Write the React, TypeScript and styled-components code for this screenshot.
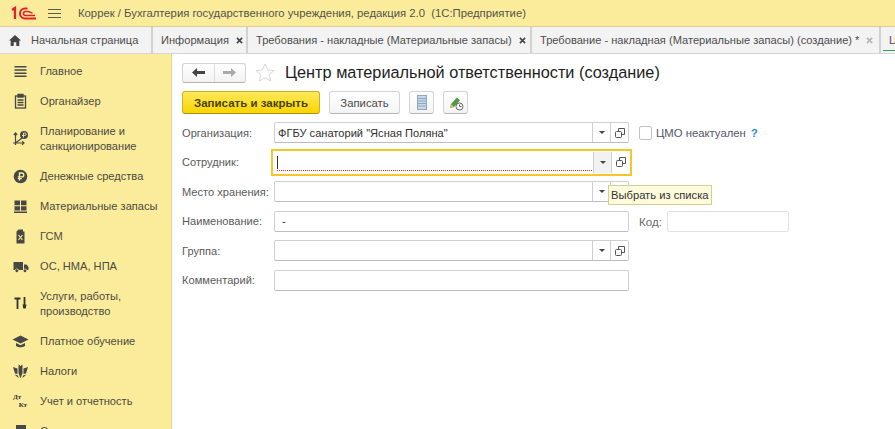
import React from "react";
import styled, { createGlobalStyle } from "styled-components";

const Global = createGlobalStyle`
  html, body { margin: 0; padding: 0; height: 100%; overflow: hidden; background: #fff; }
  body { font-family: "Liberation Sans", Arial, sans-serif; font-size: 11.1px; color: #4b4b4b; }
  #root { height: 100%; }
  * { box-sizing: border-box; }
`;

const Page = styled.div`display: flex; flex-direction: column; width: 895px; height: 429px; overflow: hidden; position: relative;`;
const Header = styled.header`display: flex; align-items: center; height: 27px; flex: none; background: #fbec9c; border-bottom: 1px solid #dcd08c; padding-left: 11px;`;
const HeaderTitle = styled.div`margin-left: 17px; font-size: 11.3px; color: #55534a; white-space: nowrap;`;
const MenuIcon = styled.svg`margin-left: 11px; flex: none;`;
const Tabs = styled.nav`display: flex; height: 27px; flex: none; background: #f3f3f3; border-bottom: 1px solid #d6d6d6; overflow: hidden;`;
const Tab = styled.div<{ $w: number; $last?: boolean; $first?: boolean }>`
  display: flex; align-items: center; flex: none; width: ${p => p.$w}px; padding-left: ${p => (p.$first ? 9 : 8)}px; white-space: nowrap; color: #4d4d4d;
  border-right: ${p => (p.$last ? "none" : "2px solid #d2d2d2")}; position: relative;
`;
const TabText = styled.span`flex: none;`;
const HomeIcon = styled.svg`margin-right: 10px; flex: none;`;
const TabClose = styled.span`display: flex; flex: none; margin-left: 7px;`;
const ActiveMark = styled.div`position: absolute; left: 2px; right: 0; bottom: 2px; height: 1px; background: #2f9e5b;`;
const Main = styled.div`display: flex; flex: 1; min-height: 0;`;
const Side = styled.aside`width: 172px; flex: none; background: #fbec9c; border-right: 1px solid #e5d98f; padding-top: 2px; overflow: hidden;`;
const SideItem = styled.div<{ $double?: boolean }>`display: flex; align-items: center; flex: none; height: ${p => (p.$double ? 45 : 30)}px; color: #4c4a3e; line-height: 14.5px;`;
const SideIcon = styled.div`width: 40px; flex: none; display: flex; justify-content: center;`;
const SideLabel = styled.div``;
const Journal = styled.span`font-family: "Liberation Serif", serif; font-weight: 700; font-size: 7px; line-height: 8px; color: #333; display: block; width: 14px;`;
const JournalBottom = styled(Journal)`text-align: right;`;
const Content = styled.main`flex: 1; padding: 8px 0 0 10px; position: relative;`;
const TitleRow = styled.div`display: flex; align-items: center; height: 21px;`;
const NavGroup = styled.div`display: flex; width: 64px; height: 20px; background: linear-gradient(#fff, #f2f2f2); border: 1px solid #d4d4d4; border-bottom-color: #b5b5b5; border-radius: 3px; margin-right: 9px;`;
const NavBtn = styled.div<{ $sep?: boolean }>`flex: 1; display: flex; align-items: center; justify-content: center; border-left: ${p => (p.$sep ? "1px solid #dcdcdc" : "none")};`;
const Title = styled.h1`margin: 0 0 0 10px; font-size: 16.3px; font-weight: 400; color: #1d1d1d; white-space: nowrap;`;
const Toolbar = styled.div`display: flex; gap: 9px; margin-top: 8px; height: 23px;`;
const Primary = styled.button`width: 138px; height: 23px; padding: 0; font: 700 11.5px "Liberation Sans", sans-serif; color: #4a4300; background: linear-gradient(#fee95a, #f9d500); border: 1px solid #cdb220; border-bottom-color: #ac9512; border-radius: 3px;`;
const Secondary = styled.button<{ $w: number }>`width: ${p => p.$w}px; height: 23px; padding: 0; font: 11.3px "Liberation Sans", sans-serif; color: #4b4b4b; background: linear-gradient(#fff, #f4f4f4); border: 1px solid #d4d4d4; border-bottom-color: #b5b5b5; border-radius: 3px; display: flex; align-items: center; justify-content: center;`;
const Form = styled.div`display: flex; flex-direction: column; gap: 8.6px; margin-top: 8px; position: relative;`;
const Row = styled.div`display: flex; align-items: center; height: 21px;`;
const Label = styled.label`width: 92px; flex: none; color: #5a5a5a; white-space: nowrap;`;
const Field = styled.div<{ $w?: number; $focus?: boolean; $faint?: boolean }>`
  display: flex; align-items: stretch; flex: none; width: ${p => p.$w ?? 355}px; height: 21px; background: #fff; border-radius: 2px;
  border: 1px solid ${p => (p.$faint ? "#e2e2e2" : "#cfcfcf")}; border-bottom-color: ${p => (p.$faint ? "#e2e2e2" : "#bdbdbd")};
  ${p => p.$focus && "outline: 2px solid #f6c62a; outline-offset: 1px; border: 0; border-radius: 0;"}
`;
const Value = styled.div<{ $pad?: number }>`flex: 1; min-width: 0; padding-left: ${p => p.$pad ?? 3}px; display: flex; align-items: center; color: #303030; position: relative;`;
const Caret = styled.div`width: 1px; height: 13px; background: #333;`;
const ErrorLine = styled.div`position: absolute; left: 3px; right: 1px; bottom: 2px; border-bottom: 1px dotted #f0303a;`;
const Cell = styled.div<{ $hover?: boolean }>`width: 18px; flex: none; display: flex; align-items: center; justify-content: center; border-left: 1px solid #cfcfcf; background: ${p => (p.$hover ? "#f2f2f2" : "#fff")};`;
const Check = styled.div`width: 13px; height: 14px; margin-left: 10px; border: 1px solid #c4c4c4; border-radius: 2px; background: #fff; flex: none;`;
const CheckLabel = styled.span`margin-left: 4px; font-size: 11.3px; color: #55556a;`;
const Help = styled.span`margin-left: 5px; font-size: 11.5px; color: #2f8fd0; font-weight: 700;`;
const CodeLabel = styled.span`margin-left: 10px; width: 28px; flex: none; font-size: 11.6px; color: #6a6a6a;`;
const Tooltip = styled.div`position: absolute; left: 426px; top: 63px; width: 104px; height: 20px; padding-left: 2px; font-size: 11.2px; display: flex; align-items: center; background: #fdfbdc; border: 1px solid #d5cf92; color: #333; white-space: nowrap;`;

const DD = () => <svg width="6" height="3" viewBox="0 0 6 3"><path d="M0 0h6L3 3z" fill="#444" /></svg>;
const Open = () => (
  <svg width="10" height="10" viewBox="0 0 10 10" fill="none" stroke="#555" strokeWidth="1">
    <path d="M3.500 3V.5h6v6H7" />
    <rect x=".5" y="3.500" width="6" height="6" rx="1" />
  </svg>
);
const X = ({ c = "#444" }: { c?: string }) => (
  <svg width="7" height="7" viewBox="0 0 8 8" stroke={c} strokeWidth="1.800"><path d="M1 1l6 6M7 1L1 7" /></svg>
);

const ic = { width: 17, height: 17, viewBox: "0 0 17 17" };
const icons: Record<string, React.ReactNode> = {
  main: <svg {...ic} fill="#474747"><path d="M2.500 3h12v1.500h-12zM2.500 6.200h12v1.500h-12zM2.500 9.400h12v1.500h-12zM2.500 12.600h12v1.500h-12z" /></svg>,
  org: <svg {...ic} fill="none" stroke="#474747" strokeWidth="1.300"><rect x="3.500" y="3" width="10" height="12" /><path d="M6 1.500h5V4H6z" fill="#474747" /><path d="M5.500 7h6M5.500 9.500h6M5.500 12h6" /></svg>,
  plan: <svg {...ic} fill="none" stroke="#474747" strokeWidth="1.200"><path d="M3.500 3v12M1 13h11M3.500 13l6.500-5" /><path d="M1.800 5l1.700-2 1.700 2M10 11.300l2 1.700-2 1.700" /><circle cx="12" cy="5" r="4" fill="#474747" stroke="none" /><path d="M11.500 7.500V3h1.400a1.200 1.200 0 010 2.500H10" stroke="#fbec9c" strokeWidth=".9" /></svg>,
  money: <svg {...ic}><circle cx="8.500" cy="8.500" r="6.800" fill="#474747" /><path d="M7.500 12.500V5h2.300a1.900 1.900 0 010 3.900H5.800M5.800 10.600h4" fill="none" stroke="#fbec9c" strokeWidth="1.400" /></svg>,
  stock: <svg {...ic} fill="#474747"><path d="M2.500 2.500h5.500v4.800H2.500zM9 2.500h5.500v4.800H9zM2.500 8.300h5.500v4.200H2.500zM9 8.300h5.500v4.200H9zM2 13.600h13v1.300H2z" /></svg>,
  gsm: <svg {...ic}><path d="M4.500 3.500l2-2h4.500v2h1.500v12h-8z" fill="#474747" /><path d="M6.500 7l4 5M10.500 7l-4 5" stroke="#fbec9c" strokeWidth="1.200" /></svg>,
  truck: <svg {...ic} fill="#474747"><path d="M1.500 4h9.500v8h-9.500zM12 6.500h2.500l2 2.500v3H12z" /><circle cx="4.800" cy="12.800" r="1.800" stroke="#fbec9c" strokeWidth=".7" /><circle cx="13" cy="12.800" r="1.800" stroke="#fbec9c" strokeWidth=".7" /></svg>,
  serv: <svg {...ic} fill="none" stroke="#333" strokeWidth="1.800"><path d="M2.500 3.500h6M5.500 3.500V14M12.500 2v8" /><path d="M10.500 9.500h4l-.8 4h-2.400z" fill="#333" stroke="none" /></svg>,
  edu: <svg {...ic} fill="#474747"><path d="M8.500 2.500l8 4-8 4-8-4z" /><path d="M4 10v3c2.500 1.800 6.500 1.800 9 0v-3l-4.500 2.300z" /></svg>,
  tax: <svg {...ic} fill="#474747"><path d="M6.500 1.500l2 1.500 2-1.500V10l-2 5.500-2-5.500zM1 4l4.500 1.500V11L3 10.500zM16 4l-4.500 1.500V11l2.500-.5zM2.500 11.500L6 12.500 6.500 15zM14.500 11.500L11 12.500 10.500 15z" /></svg>,
  rep: <div><Journal>Дт</Journal><JournalBottom>Кт</JournalBottom></div>,
  other: <svg {...ic} fill="#474747"><path d="M4 2h10v9H4z" /></svg>,
};

const items: [string, string, boolean?][] = [
  ["main", "Главное"], ["org", "Органайзер"],
  ["plan", "Планирование и санкционирование", true],
  ["money", "Денежные средства"], ["stock", "Материальные запасы"], ["gsm", "ГСМ"], ["truck", "ОС, НМА, НПА"],
  ["serv", "Услуги, работы, производство", true],
  ["edu", "Платное обучение"], ["tax", "Налоги"], ["rep", "Учет и отчетность"], ["other", "Сервис"],
];

const Actions = ({ hover }: { hover?: boolean }) => (
  <>
    <Cell $hover={hover}><DD /></Cell>
    <Cell><Open /></Cell>
  </>
);

export default function App() {
  return (
    <Page>
      <Global />
      <Header>
        <svg width="26" height="15" viewBox="0 0 26 15" fill="none" stroke="#e5202a">
          <path d="M1 4l3-2v11" strokeWidth="2.300" />
          <path d="M25 12.500H14a5 5 0 110-10h2.500" strokeWidth="2" />
          <path d="M24 9.500H14.500a2 2 0 110-4H17c2 0 3 1.500 4.500 1.500" strokeWidth="1.600" />
        </svg>
        <MenuIcon width="13" height="11" viewBox="0 0 13 11" stroke="#5a5a50" strokeWidth="1"><path d="M0 1.500h13M0 5.500h13M0 9.500h13" /></MenuIcon>
        <HeaderTitle>Коррек / Бухгалтерия государственного учреждения, редакция 2.0&nbsp; (1С:Предприятие)</HeaderTitle>
      </Header>
      <Tabs>
        <Tab $w={153} $first>
          <HomeIcon width="12" height="11" viewBox="0 0 12 11" fill="#444"><path d="M6 0l6 5.500h-1.700V11H7.300V7.300H4.700V11H1.700V5.500H0z" /></HomeIcon>
          <TabText>Начальная страница</TabText>
        </Tab>
        <Tab $w={95}><TabText>Информация</TabText><TabClose><X /></TabClose></Tab>
        <Tab $w={284}><TabText>Требования - накладные (Материальные запасы)</TabText><TabClose><X /></TabClose></Tab>
        <Tab $w={349}><TabText>Требование - накладная (Материальные запасы) (создание) *</TabText><TabClose><X c="#b5b5b5" /></TabClose></Tab>
        <Tab $w={14} $last><TabText>Ц</TabText><ActiveMark /></Tab>
      </Tabs>
      <Main>
        <Side>
          {items.map(([k, t, d]) => (
            <SideItem key={k} $double={d}>
              <SideIcon>{icons[k]}</SideIcon>
              <SideLabel>{t}</SideLabel>
            </SideItem>
          ))}
        </Side>
        <Content>
          <TitleRow>
            <NavGroup>
              <NavBtn>
                <svg width="13" height="9" viewBox="0 0 13 9" fill="#444"><path d="M0 4.500L5 0v3h8v3H5v3z" /></svg>
              </NavBtn>
              <NavBtn $sep>
                <svg width="13" height="9" viewBox="0 0 13 9" fill="#aaa"><path d="M13 4.500L8 0v3H0v3h8v3z" /></svg>
              </NavBtn>
            </NavGroup>
            <svg width="20" height="19" viewBox="0 0 20 19" fill="#fff" stroke="#d8d8d8"><path d="M10 1l2.700 6 6.300.6-4.800 4.200 1.500 6.200L10 14.700 4.300 18l1.500-6.200L1 7.600 7.300 7z" /></svg>
            <Title>Центр материальной ответственности (создание)</Title>
          </TitleRow>
          <Toolbar>
            <Primary>Записать и закрыть</Primary>
            <Secondary $w={71}>Записать</Secondary>
            <Secondary $w={25}>
              <svg width="10" height="15" viewBox="0 0 10 15"><rect x=".5" y=".5" width="9" height="14" fill="#c3d8e8" stroke="#8fa9bf" /><path d="M1 3.500h8M1 6h8M1 8.500h8M1 11h8" stroke="#8fa9bf" /></svg>
            </Secondary>
            <Secondary $w={25}>
              <svg width="16" height="16" viewBox="0 0 16 16"><path d="M2 13l1-4 6-6.500 3 3L6 12z" fill="#4f9a3c" /><path d="M2 13l1-4 3 3z" fill="#d8b98a" /><circle cx="11.500" cy="11.500" r="3.500" fill="#fff" stroke="#666" /><path d="M11.500 9.500v2h2" fill="none" stroke="#666" /></svg>
            </Secondary>
          </Toolbar>
          <Form>
            <Row>
              <Label>Организация:</Label>
              <Field><Value>ФГБУ санаторий "Ясная Поляна"</Value><Actions /></Field>
              <Check /><CheckLabel>ЦМО неактуален</CheckLabel><Help>?</Help>
            </Row>
            <Row>
              <Label>Сотрудник:</Label>
              <Field $focus><Value><Caret /><ErrorLine /></Value><Actions hover /></Field>
            </Row>
            <Row>
              <Label>Место хранения:</Label>
              <Field><Value /><Actions /></Field>
            </Row>
            <Row>
              <Label>Наименование:</Label>
              <Field><Value $pad={7}>-</Value></Field>
              <CodeLabel>Код:</CodeLabel>
              <Field $w={122} $faint />
            </Row>
            <Row>
              <Label>Группа:</Label>
              <Field><Value /><Actions /></Field>
            </Row>
            <Row>
              <Label>Комментарий:</Label>
              <Field />
            </Row>
            <Tooltip>Выбрать из списка</Tooltip>
          </Form>
        </Content>
      </Main>
    </Page>
  );
}
